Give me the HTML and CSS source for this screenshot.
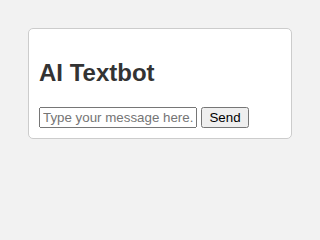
FILE: index.html
```html
<!DOCTYPE html>
<html>
<head>
<meta charset="utf-8">
<link rel="stylesheet" href="styles.css">
</head>
<body>
<div class="card">
  <h1 class="title">AI Textbot</h1>
  <form class="chat-form">
    <input class="msg" type="text" placeholder="Type your message here.">
    <button class="send" type="button">Send</button>
  </form>
</div>
</body>
</html>
```
FILE: styles.css
```css
body {
  margin: 8px;
  background: #f2f2f2;
  font-family: "Liberation Sans", Arial, sans-serif;
}
.card {
  margin: 20px;
  padding: 10px;
  background: #fff;
  border: 1px solid #ccc;
  border-radius: 5px;
}
.title {
  font-size: 24px;
  color: #333;
  margin: 20px 0;
}
.chat-form {
  margin: 0;
}
.msg, .send {
  font-family: "Liberation Sans", Arial, sans-serif;
}
.msg {
  width: 150px;
}
```
